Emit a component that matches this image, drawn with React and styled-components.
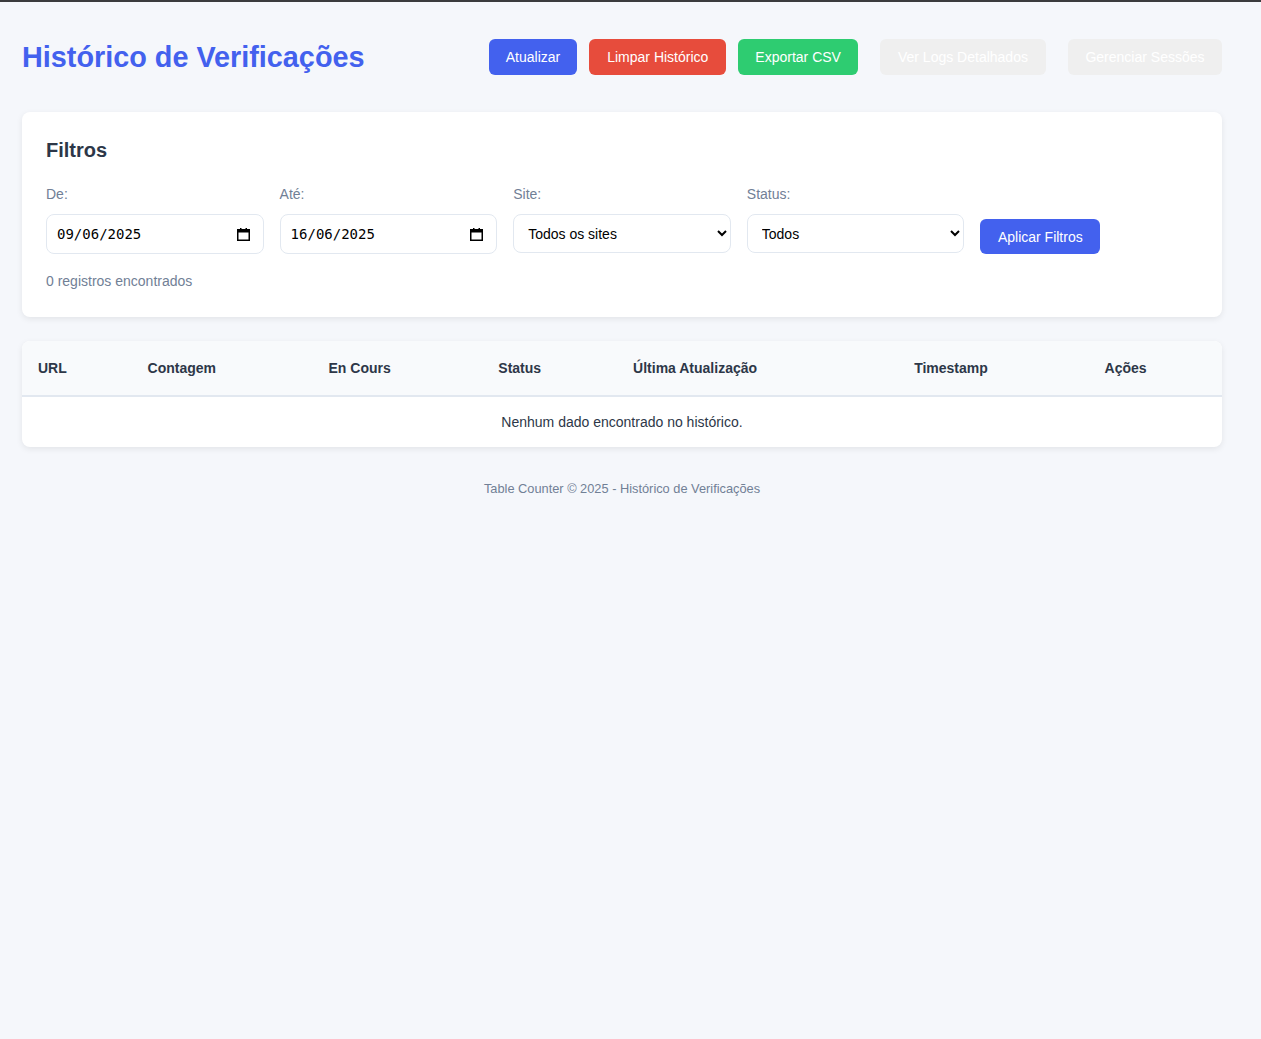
import React, {useState} from 'react'
import styled, {createGlobalStyle} from 'styled-components'

const GlobalStyle = createGlobalStyle`
    html, body {
        margin: 0;
        padding: 0;
        background: #f5f7fb;
    }
    body {
        border-top: 2px solid #3b3b3d;
        font-family: "Liberation Sans", Arial, sans-serif;
        color: #2d3748;
    }
`

const Page = styled.div`
    width: 1200px;
    padding: 37px 0 40px 22px;
`

const Header = styled.header`
    display: flex;
    align-items: center;
    justify-content: space-between;
    margin-bottom: 37px;
`

const Title = styled.h1`
    margin: 0;
    font-size: 28.8px;
    font-weight: 700;
    color: #4361ee;
`

const Actions = styled.div`
    display: flex;
    align-items: center;
    gap: 12px;
`

const colors = {
    blue: '#4361ee',
    red: '#e74c3c',
    green: '#2ecc71',
    ghost: '#efefef',
}

const Button = styled.button`
    height: ${p => p.$h || 36}px;
    padding: 0 ${p => p.$px || 17}px;
    margin-left: ${p => p.$ghost ? 10 : 0}px;
    border: none;
    border-radius: 6px;
    background: ${p => colors[p.$color]};
    color: #fff;
    font-family: "Liberation Sans", Arial, sans-serif;
    font-size: 14px;
    cursor: pointer;
    white-space: nowrap;
`

const Card = styled.section`
    background: #fff;
    border-radius: 8px;
    box-shadow: 0 2px 6px rgba(0, 0, 0, 0.08);
    padding: ${p => p.$pad || 0};
    margin-bottom: 24px;
    overflow: hidden;
`

const CardTitle = styled.h3`
    margin: 0 0 24px;
    font-size: 20px;
    font-weight: 700;
    color: #2d3748;
`

const FilterGrid = styled.div`
    display: grid;
    grid-template-columns: repeat(5, 1fr);
    gap: 16px;
    align-items: end;
`

const Field = styled.div`
    display: flex;
    flex-direction: column;
`

const Label = styled.label`
    font-size: 14px;
    line-height: 16px;
    color: #718096;
    margin-bottom: 12px;
`

const DateBox = styled.div`
    height: 40px;
    box-sizing: border-box;
    display: flex;
    align-items: center;
    justify-content: space-between;
    padding: 0 13px 0 10px;
    border: 1px solid #e2e8f0;
    border-radius: 8px;
    background: #fff;
    font-family: "DejaVu Sans Mono", monospace;
    font-size: 14px;
    color: #000;
`

const Select = styled.select`
    height: 39px;
    padding: 0 6px 0 10px;
    border: 1px solid #e2e8f0;
    border-radius: 8px;
    background: #fff;
    font-family: "Liberation Sans", Arial, sans-serif;
    font-size: 14px;
    color: #000;
    margin-bottom: 1px;
`

const ApplyCell = styled.div`
    justify-self: start;
`

const Count = styled.p`
    margin: 17px 0 0;
    font-size: 14px;
    line-height: 20px;
    color: #718096;
`

const Table = styled.table`
    width: 100%;
    border-collapse: collapse;
    font-size: 14px;
`

const Th = styled.th`
    text-align: left;
    padding: 19px 16px;
    line-height: 16px;
    background: #f8fafc;
    border-bottom: 2px solid #e2e8f0;
    font-weight: 700;
    color: #2d3748;
    white-space: nowrap;
`

const Empty = styled.td`
    text-align: center;
    padding: 17px 16px;
    line-height: 16px;
    color: #2d3748;
`

const Footer = styled.footer`
    text-align: center;
    font-size: 12.8px;
    color: #718096;
    padding-top: 10px;
`

const CalendarIcon = () => (
    <svg width="13" height="13" viewBox="0 0 13 13">
        <rect x="0.75" y="1.75" width="11.5" height="10.5" fill="none" stroke="#000" strokeWidth="1.5" />
        <rect x="0" y="1" width="13" height="3.5" fill="#000" />
        <rect x="3" y="0" width="1.5" height="2" fill="#000" />
        <rect x="8.5" y="0" width="1.5" height="2" fill="#000" />
    </svg>
)

const columns = ['URL', 'Contagem', 'En Cours', 'Status', 'Última Atualização', 'Timestamp', 'Ações']

const App = () => {
    const [site, setSite] = useState('all')
    const [status, setStatus] = useState('all')

    return (
        <>
            <GlobalStyle />
            <Page>
                <Header>
                    <Title>Histórico de Verificações</Title>
                    <Actions>
                        <Button $color="blue">Atualizar</Button>
                        <Button $color="red" $px={18}>Limpar Histórico</Button>
                        <Button $color="green">Exportar CSV</Button>
                        <Button $color="ghost" $ghost $px={18}>Ver Logs Detalhados</Button>
                        <Button $color="ghost" $ghost $px={17.5}>Gerenciar Sessões</Button>
                    </Actions>
                </Header>

                <Card $pad="27px 24px 26px">
                    <CardTitle>Filtros</CardTitle>
                    <FilterGrid>
                        <Field>
                            <Label>De:</Label>
                            <DateBox>
                                <span>09/06/2025</span>
                                <CalendarIcon />
                            </DateBox>
                        </Field>
                        <Field>
                            <Label>Até:</Label>
                            <DateBox>
                                <span>16/06/2025</span>
                                <CalendarIcon />
                            </DateBox>
                        </Field>
                        <Field>
                            <Label>Site:</Label>
                            <Select value={site} onChange={e => setSite(e.target.value)}>
                                <option value="all">Todos os sites</option>
                            </Select>
                        </Field>
                        <Field>
                            <Label>Status:</Label>
                            <Select value={status} onChange={e => setStatus(e.target.value)}>
                                <option value="all">Todos</option>
                            </Select>
                        </Field>
                        <ApplyCell>
                            <Button $color="blue" $h={35} $px={17.5}>Aplicar Filtros</Button>
                        </ApplyCell>
                    </FilterGrid>
                    <Count>0 registros encontrados</Count>
                </Card>

                <Card>
                    <Table>
                        <thead>
                            <tr>
                                {columns.map(c => <Th key={c}>{c}</Th>)}
                            </tr>
                        </thead>
                        <tbody>
                            <tr>
                                <Empty colSpan={7}>Nenhum dado encontrado no histórico.</Empty>
                            </tr>
                        </tbody>
                    </Table>
                </Card>

                <Footer>Table Counter © 2025 - Histórico de Verificações</Footer>
            </Page>
        </>
    )
}

export default App
